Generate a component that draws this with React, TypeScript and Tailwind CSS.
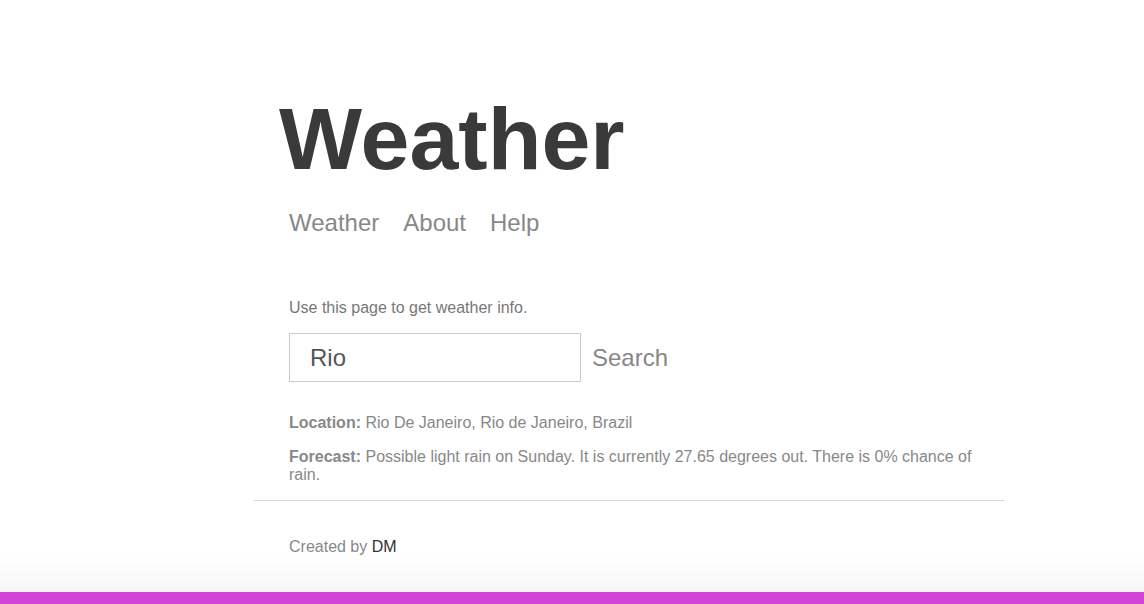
import React from "react";

export default function App() {
  return (
    <div className="w-full bg-white" style={{ fontFamily: '"Liberation Sans", Arial, sans-serif' }}>
      <div className="ml-[254px] w-[750px] pt-[95px]">
        <h1 className="ml-[25px] text-[88px] leading-none font-bold text-[#3a3a3a]">Weather</h1>
        <nav className="mt-[28px] ml-[35px] flex gap-[24px] text-[24px] leading-[24px] text-[#888]">
          <a>Weather</a>
          <a>About</a>
          <a>Help</a>
        </nav>
        <div className="pl-[35px] pr-[14px]">
          <p className="mt-[64px] text-[16px] leading-[18px] text-[#777]">Use this page to get weather info.</p>
          <form className="mt-[16px] flex items-center gap-[11px]" onSubmit={(e) => e.preventDefault()}>
            <input
              defaultValue="Rio"
              className="h-[49px] w-[292px] border border-[#ccc] px-[20px] text-[24px] text-[#555] outline-none"
              style={{ fontFamily: '"Liberation Sans", Arial, sans-serif' }}
            />
            <button className="text-[24px] text-[#888]" style={{ fontFamily: '"Liberation Sans", Arial, sans-serif' }}>
              Search
            </button>
          </form>
          <p className="mt-[32px] text-[16px] leading-[18px] text-[#888]">
            <b>Location:</b> Rio De Janeiro, Rio de Janeiro, Brazil
          </p>
          <p className="mt-[16px] text-[16px] leading-[18px] text-[#888]">
            <b>Forecast:</b> Possible light rain on Sunday. It is currently 27.65 degrees out. There is 0% chance of rain.
          </p>
        </div>
        <hr className="mt-[16px] border-0 border-t border-[#d6d6d6]" />
        <p className="mt-[37px] pl-[35px] text-[16px] leading-[18px] text-[#888]">
          Created by <span className="text-[#333]">DM</span>
        </p>
      </div>
      <div className="h-[36px] w-full bg-gradient-to-b from-white to-[#f6f6f6]" />
      <div className="h-[12px] w-full bg-[#d043d5]" />
    </div>
  );
}
